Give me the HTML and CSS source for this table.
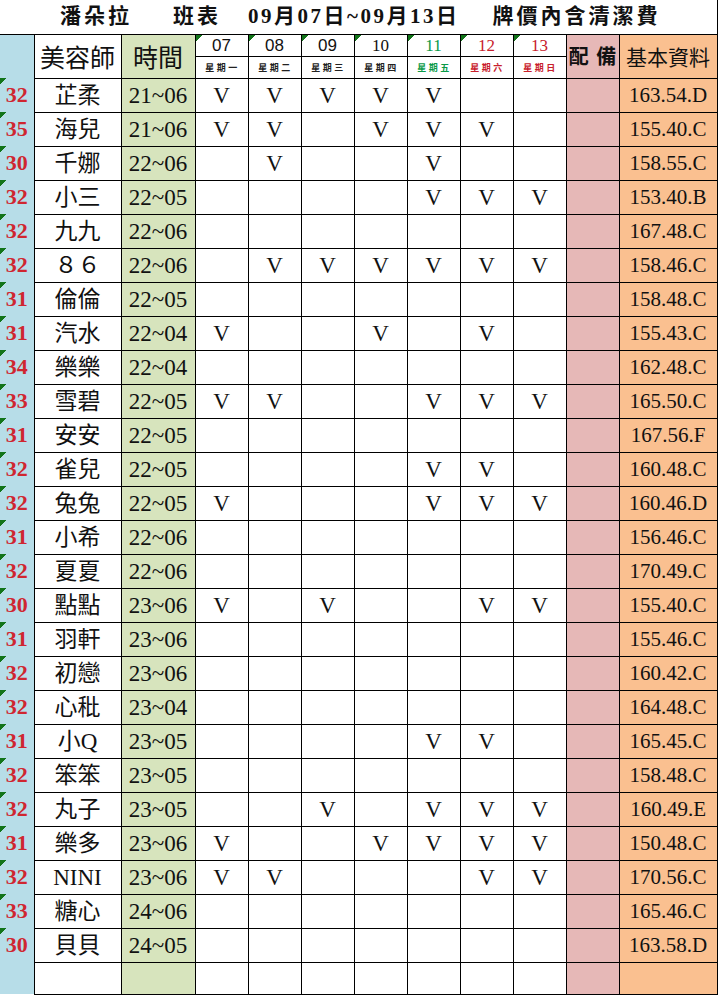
FILE: index.html
```html
<!DOCTYPE html>
<html lang="zh-Hant">
<head>
<meta charset="utf-8">
<title>潘朵拉 班表</title>
<link rel="stylesheet" href="styles.css">
</head>
<body>
<table class="sheet">
<colgroup>
<col class="c-num"><col class="c-name"><col class="c-time">
<col class="c-day"><col class="c-day"><col class="c-day"><col class="c-day"><col class="c-day"><col class="c-day"><col class="c-day">
<col class="c-pk"><col class="c-info">
</colgroup>
<tbody>
<tr class="r-title">
<td class="title" colspan="12"><div class="title-in"><span class="t1">潘朵拉</span><span class="t2">班表</span><span class="t3">09月07日~09月13日</span><span class="t4">牌價內含清潔費</span></div></td>
</tr>
<tr class="r-h1">
<td class="num" rowspan="2"></td>
<td class="hname" rowspan="2">美容師</td>
<td class="time htime" rowspan="2">時間</td>
<td class="dnum sans tri">07</td>
<td class="dnum sans tri">08</td>
<td class="dnum sans tri">09</td>
<td class="dnum tri">10</td>
<td class="dnum green tri">11</td>
<td class="dnum red tri">12</td>
<td class="dnum red tri">13</td>
<td class="pk hpk" rowspan="2">配 備</td>
<td class="info hinfo" rowspan="2">基本資料</td>
</tr>
<tr class="r-h2">
<td class="wk">星期一</td>
<td class="wk">星期二</td>
<td class="wk">星期三</td>
<td class="wk">星期四</td>
<td class="wk green">星期五</td>
<td class="wk red">星期六</td>
<td class="wk red">星期日</td>
</tr>
<tr><td class="num tri">32</td><td class="name">芷柔</td><td class="time">21~06</td><td>V</td><td>V</td><td>V</td><td>V</td><td>V</td><td></td><td></td><td class="pk"></td><td class="info">163.54.D</td></tr>
<tr><td class="num tri">35</td><td class="name">海兒</td><td class="time">21~06</td><td>V</td><td>V</td><td></td><td>V</td><td>V</td><td>V</td><td></td><td class="pk"></td><td class="info">155.40.C</td></tr>
<tr><td class="num tri">30</td><td class="name">千娜</td><td class="time">22~06</td><td></td><td>V</td><td></td><td></td><td>V</td><td></td><td></td><td class="pk"></td><td class="info">158.55.C</td></tr>
<tr><td class="num tri">32</td><td class="name">小三</td><td class="time">22~05</td><td></td><td></td><td></td><td></td><td>V</td><td>V</td><td>V</td><td class="pk"></td><td class="info">153.40.B</td></tr>
<tr><td class="num tri">32</td><td class="name">九九</td><td class="time">22~06</td><td></td><td></td><td></td><td></td><td></td><td></td><td></td><td class="pk"></td><td class="info">167.48.C</td></tr>
<tr><td class="num tri">32</td><td class="name">８６</td><td class="time">22~06</td><td></td><td>V</td><td>V</td><td>V</td><td>V</td><td>V</td><td>V</td><td class="pk"></td><td class="info">158.46.C</td></tr>
<tr><td class="num tri">31</td><td class="name">倫倫</td><td class="time">22~05</td><td></td><td></td><td></td><td></td><td></td><td></td><td></td><td class="pk"></td><td class="info">158.48.C</td></tr>
<tr><td class="num tri">31</td><td class="name">汽水</td><td class="time">22~04</td><td>V</td><td></td><td></td><td>V</td><td></td><td>V</td><td></td><td class="pk"></td><td class="info">155.43.C</td></tr>
<tr><td class="num tri">34</td><td class="name">樂樂</td><td class="time">22~04</td><td></td><td></td><td></td><td></td><td></td><td></td><td></td><td class="pk"></td><td class="info">162.48.C</td></tr>
<tr><td class="num tri">33</td><td class="name">雪碧</td><td class="time">22~05</td><td>V</td><td>V</td><td></td><td></td><td>V</td><td>V</td><td>V</td><td class="pk"></td><td class="info">165.50.C</td></tr>
<tr><td class="num tri">31</td><td class="name">安安</td><td class="time">22~05</td><td></td><td></td><td></td><td></td><td></td><td></td><td></td><td class="pk"></td><td class="info">167.56.F</td></tr>
<tr><td class="num tri">32</td><td class="name">雀兒</td><td class="time">22~05</td><td></td><td></td><td></td><td></td><td>V</td><td>V</td><td></td><td class="pk"></td><td class="info">160.48.C</td></tr>
<tr><td class="num tri">32</td><td class="name">兔兔</td><td class="time">22~05</td><td>V</td><td></td><td></td><td></td><td>V</td><td>V</td><td>V</td><td class="pk"></td><td class="info">160.46.D</td></tr>
<tr><td class="num tri">31</td><td class="name">小希</td><td class="time">22~06</td><td></td><td></td><td></td><td></td><td></td><td></td><td></td><td class="pk"></td><td class="info">156.46.C</td></tr>
<tr><td class="num tri">32</td><td class="name">夏夏</td><td class="time">22~06</td><td></td><td></td><td></td><td></td><td></td><td></td><td></td><td class="pk"></td><td class="info">170.49.C</td></tr>
<tr><td class="num tri">30</td><td class="name">點點</td><td class="time">23~06</td><td>V</td><td></td><td>V</td><td></td><td></td><td>V</td><td>V</td><td class="pk"></td><td class="info">155.40.C</td></tr>
<tr><td class="num tri">31</td><td class="name">羽軒</td><td class="time">23~06</td><td></td><td></td><td></td><td></td><td></td><td></td><td></td><td class="pk"></td><td class="info">155.46.C</td></tr>
<tr><td class="num tri">32</td><td class="name">初戀</td><td class="time">23~06</td><td></td><td></td><td></td><td></td><td></td><td></td><td></td><td class="pk"></td><td class="info">160.42.C</td></tr>
<tr><td class="num tri">32</td><td class="name">心秕</td><td class="time">23~04</td><td></td><td></td><td></td><td></td><td></td><td></td><td></td><td class="pk"></td><td class="info">164.48.C</td></tr>
<tr><td class="num tri">31</td><td class="name">小Q</td><td class="time">23~05</td><td></td><td></td><td></td><td></td><td>V</td><td>V</td><td></td><td class="pk"></td><td class="info">165.45.C</td></tr>
<tr><td class="num tri">32</td><td class="name">笨笨</td><td class="time">23~05</td><td></td><td></td><td></td><td></td><td></td><td></td><td></td><td class="pk"></td><td class="info">158.48.C</td></tr>
<tr><td class="num tri">32</td><td class="name">丸子</td><td class="time">23~05</td><td></td><td></td><td>V</td><td></td><td>V</td><td>V</td><td>V</td><td class="pk"></td><td class="info">160.49.E</td></tr>
<tr><td class="num tri">31</td><td class="name">樂多</td><td class="time">23~06</td><td>V</td><td></td><td></td><td>V</td><td>V</td><td>V</td><td>V</td><td class="pk"></td><td class="info">150.48.C</td></tr>
<tr><td class="num tri">32</td><td class="name">NINI</td><td class="time">23~06</td><td>V</td><td>V</td><td></td><td></td><td></td><td>V</td><td>V</td><td class="pk"></td><td class="info">170.56.C</td></tr>
<tr><td class="num tri">33</td><td class="name">糖心</td><td class="time">24~06</td><td></td><td></td><td></td><td></td><td></td><td></td><td></td><td class="pk"></td><td class="info">165.46.C</td></tr>
<tr><td class="num tri">30</td><td class="name">貝貝</td><td class="time">24~05</td><td></td><td></td><td></td><td></td><td></td><td></td><td></td><td class="pk"></td><td class="info">163.58.D</td></tr>
<tr class="r-last"><td class="num"></td><td class="name"></td><td class="time"></td><td></td><td></td><td></td><td></td><td></td><td></td><td></td><td class="pk"></td><td class="info"></td></tr>
</tbody>
</table>
</body>
</html>
```
FILE: styles.css
```css
body {
  margin: 0;
  background: #ffffff;
}

.sheet {
  border-collapse: collapse;
  table-layout: fixed;
  width: 717px;
  font-family: "Liberation Serif", "Noto Sans CJK TC", serif;
  color: #111111;
}

.c-num { width: 34px; }
.c-name { width: 87px; }
.c-time { width: 74px; }
.c-day { width: 53px; }
.c-pk { width: 53px; }
.c-info { width: 98px; }

.sheet td {
  border: 1px solid #000000;
  padding: 0;
  text-align: center;
  vertical-align: middle;
  white-space: nowrap;
  overflow: hidden;
  line-height: 1;
  font-size: 23px;
}

.sheet tr { height: 34px; }
.sheet tr.r-h1 { height: 22px; }
.sheet tr.r-h2 { height: 22px; }
.sheet tr.r-last { height: 32px; }

/* title */
.sheet td.title {
  border-top: none;
  border-left: none;
  height: 33px;
  text-align: left;
  font-family: "Liberation Serif", "Noto Sans CJK TC", serif;
  font-weight: 700;
  font-size: 21px;
  letter-spacing: 3px;
}
.title-in {
  display: flex;
  align-items: center;
}
.t1 { margin-left: 60px; }
.t2 { margin-left: 41px; }
.t3 { margin-left: 27px; letter-spacing: 2.5px; }
.t4 { margin-left: 33px; }

/* first column */
.sheet td.num {
  background-color: #b7dde8;
  border-top: none;
  border-bottom: none;
  border-left: none;
  color: #cf2630;
  font-weight: 700;
  font-size: 22px;
}

.tri {
  background-image: linear-gradient(135deg, #12741a 4.3px, transparent 4.3px);
  background-size: 12px 12px;
  background-repeat: no-repeat;
  background-position: 0 0;
}

.sheet td.hname {
  font-family: "Noto Sans CJK TC", sans-serif;
  font-size: 25px;
}

.sheet td.time {
  background-color: #d7e4bd;
}
.sheet td.htime {
  font-family: "Noto Sans CJK TC", sans-serif;
  font-size: 25px;
}

.sheet td.name {
  font-size: 23px;
}

.sheet td.dnum {
  font-size: 17px;
}
.sheet td.sans {
  font-family: "Liberation Sans", sans-serif;
}
.sheet td.wk {
  font-family: "Noto Sans CJK TC", sans-serif;
  font-size: 9px;
  font-weight: 700;
  letter-spacing: 2.5px;
  text-indent: 2px;
  color: #222222;
}
.sheet td.green { color: #0a9a48; }
.sheet td.red { color: #c8202c; }

.sheet td.pk {
  background-color: #e6b8b7;
}
.sheet td.hpk {
  font-family: "Noto Sans CJK TC", sans-serif;
  font-size: 20px;
  font-weight: 700;
  word-spacing: 3px;
}

.sheet td.info {
  background-color: #fac090;
  font-size: 21px;
}
.sheet td.hinfo {
  font-family: "Noto Sans CJK TC", sans-serif;
  font-size: 21px;
}
```
